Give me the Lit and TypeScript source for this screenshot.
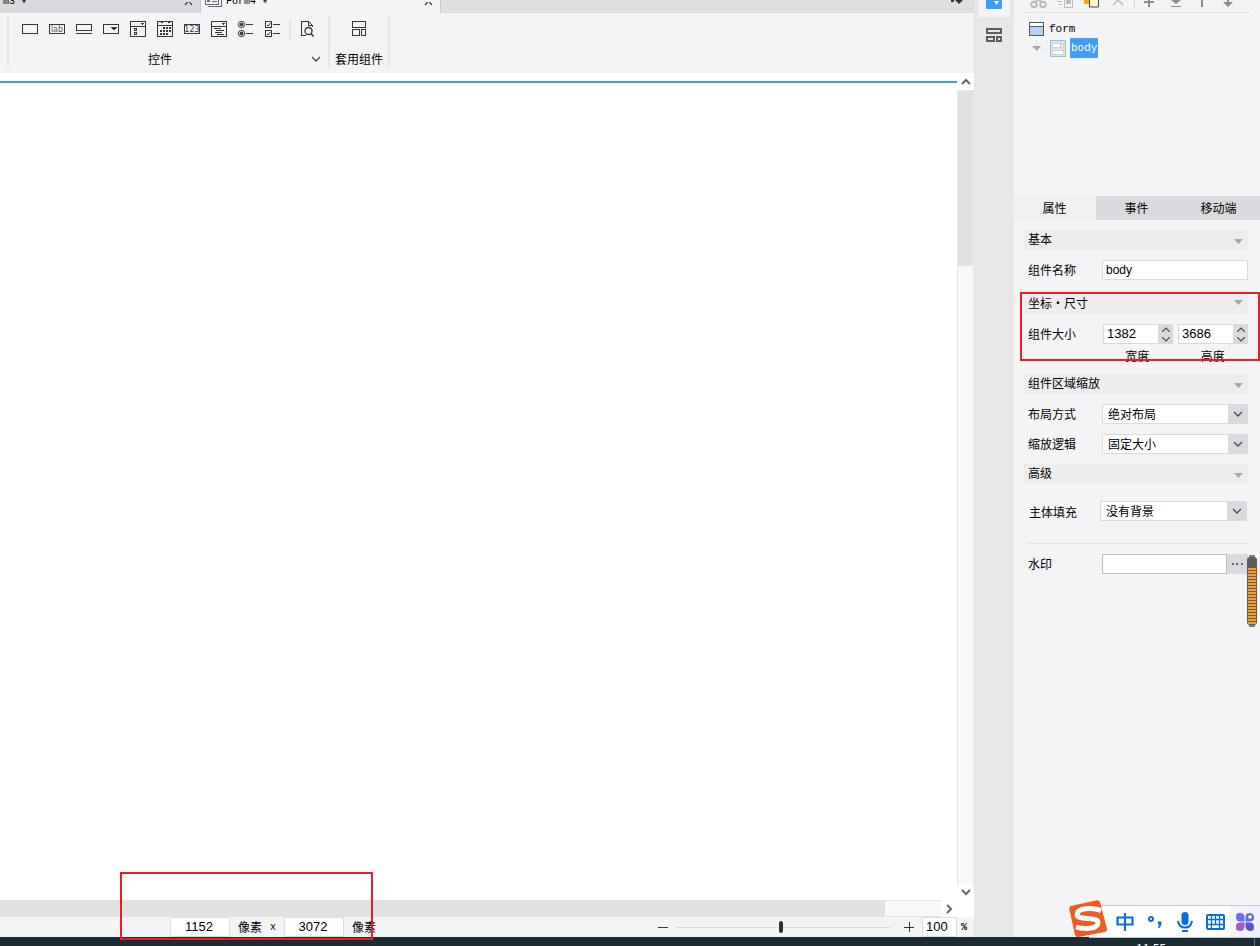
import { LitElement, html, css, svg } from "lit";
import { customElement, property, state } from "lit/decorators.js";

/* Component palette glyphs, each drawn on an 18x18 grid */
const palette = [
  { name: "文本框", art: svg`<path d="M1.5 4.5h15v9h-15z"/>` },
  {
    name: "标签",
    art: svg`<path d="M1.5 4.5h15v9h-15z"/><text x="9" y="12" font-size="8" text-anchor="middle" fill="#55585d" stroke="none">lab</text>`,
  },
  { name: "按钮", art: svg`<path d="M1.5 4.5h15v6h-15zM1 13.5h16"/>` },
  { name: "下拉框", art: svg`<path d="M1.5 4.5h15v9h-15z"/><path d="M9 7h6l-3 4z" fill="#33363b" stroke="none"/>` },
  { name: "下拉复选", art: svg`<path d="M1.5 1.5h15v15h-15zM1 6.5h16M5 8.5h2v2h-2zM5 12.5h2v2h-2z"/><path d="M11 3h4l-2 2z" fill="#33363b" stroke="none"/>` },
  {
    name: "日期",
    art: svg`<path d="M1.5 1.5h15v15h-15zM1 5.5h16"/><path d="M4.5 2.5h2M11.5 2.5h2"/><path d="M7 8h8M4 11h11M4 14h8" stroke-width="2" stroke-dasharray="2 1"/>`,
  },
  {
    name: "数字",
    art: svg`<path d="M1.5 4.5h15v9h-15z"/><text x="9" y="12" font-size="8" text-anchor="middle" fill="#33363b" stroke="none">123</text>`,
  },
  { name: "视图树", art: svg`<path d="M1.5 1.5h15v15h-15zM1 6.5h16M4 8.5h7M6 10.5h8M5 12.5h7M7 14.5h7"/><path d="M11 3h4l-2 2z" fill="#33363b" stroke="none"/>` },
  {
    name: "单选组",
    art: svg`<g shape-rendering="auto"><circle cx="4.5" cy="4.5" r="3.2"/><circle cx="4.5" cy="13.5" r="3.2"/><circle cx="4.5" cy="4.5" r="1.5" fill="#33363b"/><circle cx="4.5" cy="13.5" r="1.5" fill="#33363b"/></g><path d="M9 4.5h7M9 13.5h7"/>`,
  },
  {
    name: "复选组",
    art: svg`<path d="M1.5 1.5h6v6h-6zM1.5 10.5h6v6h-6zM9 4.5h7M9 13.5h7"/><path shape-rendering="auto" d="M3 5l1 1 2.5-3M3 14l1 1 2.5-3"/>`,
  },
];

const chevronDown = svg`<path d="M1 1l4 4 4-4" fill="none" stroke="#44474c" stroke-width="1.3"/>`;

@customElement("tool-ribbon")
class ToolRibbon extends LitElement {
  static styles = css`
    :host {
      display: flex;
      box-sizing: border-box;
      height: 60px;
      padding: 3px 0 6px 7px;
      background: #f4f4f7;
    }
    .group {
      display: flex;
      flex-direction: column;
      justify-content: space-between;
      border-right: 2px solid #e9e7dc;
    }
    .group.first {
      width: 319px;
      border-left: 2px solid #e9e7dc;
    }
    .group.second {
      width: 58px;
      align-items: center;
    }
    .icons {
      display: flex;
      align-items: center;
      gap: 9px;
      height: 26px;
      padding-left: 12px;
    }
    .second .icons {
      padding: 0;
    }
    button {
      display: block;
      border: 0;
      padding: 0;
      background: none;
    }
    svg {
      display: block;
      fill: none;
      stroke: #33363b;
      font-family: "DejaVu Sans", sans-serif;
    }
    .divider {
      width: 2px;
      height: 20px;
      margin: 0 -1px 0 -2px;
      background: #e9e7dc;
    }
    .caption {
      display: grid;
      grid-template-columns: 1fr auto;
      align-items: center;
      height: 16px;
      line-height: 16px;
      text-align: center;
      padding-right: 7px;
    }
    .second .caption {
      padding: 0;
      display: block;
    }
  `;
  render() {
    return html`
      <div class="group first">
        <div class="icons">
          ${palette.map(
            (p) => html`<button aria-label=${p.name}>
              <svg width="18" height="18" shape-rendering="crispEdges">${p.art}</svg>
            </button>`
          )}
          <span class="divider"></span>
          <button aria-label="预览">
            <svg width="18" height="18">
              <path d="M13.5 7V5.5L9.5 1.5h-7v14h4M9.5 1.5v4h4" shape-rendering="crispEdges" />
              <circle cx="9.5" cy="11" r="3.5" stroke-width="1.3" />
              <path d="M12 13.5l2.5 3" stroke-width="1.5" />
            </svg>
          </button>
        </div>
        <div class="caption">
          <span>控件</span>
          <button aria-label="更多控件"><svg width="10" height="7">${chevronDown}</svg></button>
        </div>
      </div>
      <div class="group second">
        <div class="icons">
          <button aria-label="套用组件">
            <svg width="18" height="18" shape-rendering="crispEdges">
              <path d="M2.5 1.5h13v6h-13zM2.5 9.5h7v6h-7zM11.5 9.5h4v6h-4z" />
            </svg>
          </button>
        </div>
        <div class="caption">套用组件</div>
      </div>
    `;
  }
}

@customElement("design-area")
class DesignArea extends LitElement {
  static styles = css`
    :host {
      display: grid;
      grid-template-columns: minmax(0, 1fr) 17px;
      grid-template-rows: minmax(0, 1fr) 17px;
      background: #fff;
    }
    .sheet {
      padding-top: 8px;
    }
    .edge {
      height: 2px;
      background: #409cf8;
    }
    button {
      display: grid;
      place-items: center;
      flex: none;
      border: 0;
      padding: 0;
      background: #fff;
    }
    svg {
      fill: none;
      stroke: #66686c;
      stroke-width: 2;
    }
    .vbar {
      display: flex;
      flex-direction: column;
    }
    .vbar button {
      height: 17px;
    }
    .vbar .down {
      height: 15px;
    }
    .vtrack {
      flex: 1;
      background: #f8f8f7;
      border: solid #e9e8e2;
      border-width: 1px 1px 0 1px;
    }
    .vthumb {
      height: 22%;
      background: #e1e1e1;
    }
    .hbar {
      display: flex;
    }
    .hbar button {
      width: 16px;
    }
    .htrack {
      flex: 1;
      box-sizing: border-box;
      background: #f8f8f7;
      border: solid #e9e6d9;
      border-width: 1px 0;
    }
    .hthumb {
      width: 94%;
      height: 100%;
      background: #e1e1e1;
    }
  `;
  render() {
    return html`
      <div class="sheet"><div class="edge"></div></div>
      <div class="vbar">
        <button aria-label="向上"><svg width="10" height="7"><path d="M1 6l4-4 4 4" /></svg></button>
        <div class="vtrack"><div class="vthumb"></div></div>
        <button class="down" aria-label="向下"><svg width="10" height="7"><path d="M1 1l4 4 4-4" /></svg></button>
      </div>
      <div class="hbar">
        <div class="htrack"><div class="hthumb"></div></div>
        <button aria-label="向右"><svg width="7" height="10"><path d="M1 1l4 4-4 4" /></svg></button>
      </div>
    `;
  }
}

@customElement("status-bar")
class StatusBar extends LitElement {
  @state() zoom = 49;
  static styles = css`
    :host {
      display: flex;
      justify-content: space-between;
      height: 20px;
      line-height: 20px;
      background: #f4f4f7;
    }
    .size,
    .zoom {
      display: flex;
      align-items: center;
    }
    .size {
      padding-left: 170px;
      gap: 8px;
    }
    .zoom {
      gap: 8px;
      padding-right: 7px;
    }
    input {
      box-sizing: border-box;
      font: 13px "Liberation Sans", sans-serif;
      color: #000;
    }
    .num {
      width: 60px;
      height: 20px;
      padding: 0 2px 1px 0;
      border: 1px solid #dcdde0;
      background: #fff;
      text-align: center;
    }
    .pct {
      width: 35px;
      padding: 0 3px 1px;
      text-align: left;
    }
    .by {
      font: 10px "Liberation Mono", monospace;
      width: 6px;
    }
    .sign {
      font: bold 10px "Liberation Mono", monospace;
      margin-left: -4px;
    }
    .zoom button {
      border: 0;
      padding: 0;
      background: none;
      display: grid;
    }
    svg {
      stroke: #33363b;
    }
    .slider {
      appearance: none;
      width: 214px;
      height: 12px;
      margin: 0 6px 0 0;
      background: linear-gradient(#d9dadd, #d9dadd) center / 100% 1px no-repeat;
    }
    .slider::-webkit-slider-thumb {
      appearance: none;
      width: 4px;
      height: 12px;
      border-radius: 2px;
      background: #333;
    }
  `;
  render() {
    return html`
      <div class="size">
        <input class="num" aria-label="宽度像素" value="1152" />
        <span>像素</span><span class="by">x</span>
        <input class="num" aria-label="高度像素" value="3072" />
        <span>像素</span>
      </div>
      <div class="zoom">
        <button aria-label="缩小"><svg width="10" height="10"><path d="M0 5.5h10" /></svg></button>
        <input
          class="slider"
          type="range"
          aria-label="缩放"
          .value=${String(this.zoom)}
          @input=${(e: Event) => (this.zoom = Number((e.target as HTMLInputElement).value))}
        />
        <button aria-label="放大"><svg width="10" height="10"><path d="M0 5.5h10M5.5 0v10" /></svg></button>
        <input class="num pct" aria-label="缩放比例" value="100" />
        <span class="sign">%</span>
      </div>
    `;
  }
}

@customElement("section-title")
class SectionTitle extends LitElement {
  @property() text = "";
  static styles = css`
    :host {
      display: flex;
      justify-content: space-between;
      align-items: center;
      height: 20px;
      margin-left: -4px;
      padding: 0 5px 0 4px;
      background: #ededee;
    }
    :host([tall]) {
      height: 24px;
    }
    span {
      padding-bottom: 3px;
    }
    svg {
      margin-top: 4px;
      fill: #a6a7a9;
    }
    :host([tall]) span {
      padding: 0;
    }
    :host([tall]) svg {
      margin-top: 1px;
    }
  `;
  render() {
    return html`<span>${this.text}</span><svg width="9" height="6"><path d="M0 0h9L4.5 5z" /></svg>`;
  }
}

@customElement("property-panel")
class PropertyPanel extends LitElement {
  static styles = css`
    :host {
      display: block;
      background: #f4f4f7;
      overflow: hidden;
    }
    .tools {
      display: flex;
      box-sizing: border-box;
      height: 13px;
      margin: 0 10px;
      padding-left: 6px;
      gap: 9px;
      border-bottom: 1px solid #e3e3e5;
    }
    .tools button {
      border: 0;
      padding: 0;
      background: none;
      height: 12px;
      width: 18px;
    }
    .tools svg,
    .tree svg {
      display: block;
      flex: none;
    }
    .vline {
      width: 1px;
      height: 8px;
      margin: 0 -3px 0 -4px;
      background: #d5d6d8;
    }
    .tree {
      height: 183px;
      box-sizing: border-box;
      padding: 7px 0 0 15px;
      font: 11px "Liberation Mono", monospace;
    }
    .node {
      display: flex;
      align-items: center;
      height: 18px;
    }
    .node.root {
      gap: 5px;
    }
    .node.child {
      height: 20px;
      gap: 4px;
      padding-left: 3px;
    }
    .picked {
      background: #409cf8;
      color: #fff;
      line-height: 20px;
      padding: 0 1px;
    }
    .tabs {
      display: grid;
      grid-template-columns: repeat(3, 1fr);
      height: 24px;
    }
    .tabs button {
      border: 0;
      padding: 0 1px 2px 0;
      font: inherit;
      color: #000;
      background: #d9dadd;
    }
    .tabs .on {
      background: #f0f0f1;
    }
    .fields {
      display: flex;
      flex-direction: column;
      gap: 10px;
      padding: 10px 12px 0 14px;
    }
    .row {
      display: grid;
      grid-template-columns: 74px minmax(0, 1fr);
      align-items: center;
      height: 20px;
    }
    .row label {
      padding-bottom: 2px;
    }
    .row.fill {
      grid-template-columns: 72px minmax(0, 1fr);
      margin: 7px 1px 12px 0;
    }
    .row.fill label {
      padding: 0 0 0 1px;
    }
    hr {
      width: 100%;
      margin: 0;
      border: 0;
      border-top: 1px solid #e4e4e6;
    }
    input,
    select {
      box-sizing: border-box;
      width: 100%;
      height: 20px;
      margin: 0;
      border: 1px solid #d9dadd;
      border-radius: 0;
      background: #fff;
      color: #000;
      font: 13px "Liberation Sans", sans-serif;
      padding: 0 3px 1px;
      min-width: 0;
    }
    .name {
      font-size: 12px;
    }
    select {
      appearance: none;
      grid-area: 1 / 1;
      font: 12px "Noto Sans CJK SC", sans-serif;
      padding: 0 5px 2px;
    }
    .drop {
      display: grid;
    }
    .arrow {
      grid-area: 1 / 1;
      justify-self: end;
      display: grid;
      place-items: center;
      width: 20px;
      height: 20px;
      background: #d9dadd;
      pointer-events: none;
    }
    .pair {
      display: grid;
      grid-template-columns: 1fr 1fr;
      gap: 5px;
      padding-left: 1px;
    }
    .spin {
      display: flex;
    }
    .spin .keys {
      flex: none;
      display: grid;
      width: 14px;
      height: 20px;
      background: #d9dadd;
    }
    .keys button,
    .more {
      display: grid;
      place-items: center;
      border: 0;
      padding: 0;
      background: #d9dadd;
    }
    .captions {
      display: grid;
      grid-template-columns: 1fr 1fr;
      gap: 5px;
      margin: -5px 0 1px 74px;
      height: 14px;
      line-height: 14px;
      text-align: center;
    }
    .browse {
      display: flex;
    }
    .browse input {
      border-color: #bcbdbf;
    }
    .more {
      flex: none;
      width: 21px;
      height: 20px;
    }
  `;

  private drop(id: string, label: string, value: string, cls = "") {
    return html`<div class="row ${cls}">
      <label for=${id}>${label}</label>
      <div class="drop">
        <select id=${id}>
          <option>${value}</option>
        </select>
        <span class="arrow"><svg width="10" height="7">${chevronDown}</svg></span>
      </div>
    </div>`;
  }

  private spin(id: string, label: string, value: string) {
    return html`<div class="spin">
      <input id=${id} aria-label=${label} value=${value} />
      <div class="keys">
        <button aria-label="增加${label}">
          <svg width="8" height="5"><path d="M0 5l4-4 4 4" fill="none" stroke="#44474c" stroke-width="1.2" /></svg>
        </button>
        <button aria-label="减少${label}">
          <svg width="8" height="5"><path d="M0 0l4 4 4-4" fill="none" stroke="#44474c" stroke-width="1.2" /></svg>
        </button>
      </div>
    </div>`;
  }

  render() {
    return html`
      <div class="tools">
        <button aria-label="剪切">
          <svg width="18" height="12" fill="none" stroke="#b9babc" stroke-width="2">
            <circle cx="4" cy="4.5" r="2.8" /><circle cx="13" cy="4.5" r="2.8" /><path d="M5.5 2L8 0M11.5 2L9 0" />
          </svg>
        </button>
        <button aria-label="复制">
          <svg width="18" height="12" fill="none" stroke="#b9babc">
            <path d="M0 1.5h5M2 4.5h3M7.5 0v7.5h8V0" /><path d="M9 0h5v4H9z" fill="#b9babc" stroke="none" />
          </svg>
        </button>
        <button aria-label="粘贴">
          <svg width="18" height="12"><path d="M0 0h6v4H0z" fill="#f5ab17" /><path d="M5.500-1v8h9v-8" fill="#fff4dc" stroke="#44474c" /></svg>
        </button>
        <button aria-label="删除">
          <svg width="18" height="12" fill="none" stroke="#b9babc" stroke-width="1.5"><path d="M2 5l5-5 5 5" /></svg>
        </button>
        <span class="vline"></span>
        <button aria-label="上移一层">
          <svg width="18" height="12" fill="none" stroke="#8b8c8f" stroke-width="2"><path d="M8 0v7M3 2h10" /></svg>
        </button>
        <button aria-label="下移一层">
          <svg width="18" height="12" fill="#8b8c8f"><path d="M3 0h10L8 4zM3 6h10v1H3z" /></svg>
        </button>
        <button aria-label="置顶">
          <svg width="18" height="12" fill="none" stroke="#8b8c8f" stroke-width="2"><path d="M7 0v7" /></svg>
        </button>
        <button aria-label="置底">
          <svg width="18" height="12" fill="#8b8c8f"><path d="M5 0h2v2h4L6 7 1 2h4z" /></svg>
        </button>
      </div>
      <div class="tree">
        <div class="node root">
          <svg width="15" height="14" fill="none" shape-rendering="crispEdges">
            <path d="M.5.5h14v13H.5z" fill="#fff" /><path d="M1 5h13v8H1z" fill="#b8d0f2" />
            <path d="M.5.5h14v13H.5zM0 4.5h15" stroke="#55585e" />
          </svg>
          <span>form</span>
        </div>
        <div class="node child">
          <svg width="14" height="16" fill="none">
            <path d="M4.5 0v6M9 8.500h4" stroke="#e3e3e5" /><path d="M0 6h9L5 11z" fill="#a6a7a9" />
          </svg>
          <svg width="16" height="17" shape-rendering="crispEdges">
            <path d="M.5.5h15v16H.5z" fill="#d9e2e9" stroke="#8fc0dc" />
            <path d="M2.5 3.5h8v4h-8zM11.5 3.5h2v4h-2zM2.5 10.5h11v4h-11z" fill="#fff" stroke="#d5d3d0" />
          </svg>
          <span class="picked">body</span>
        </div>
      </div>
      <div class="tabs">
        <button class="on">属性</button><button>事件</button><button>移动端</button>
      </div>
      <div class="fields">
        <section-title text="基本"></section-title>
        <div class="row"><label for="name">组件名称</label><input class="name" id="name" value="body" /></div>
        <section-title tall text="坐标・尺寸"></section-title>
        <div class="row">
          <label for="w">组件大小</label>
          <div class="pair">${this.spin("w", "宽度", "1382")}${this.spin("h", "高度", "3686")}</div>
        </div>
        <div class="captions"><span>宽度</span><span>高度</span></div>
        <section-title text="组件区域缩放"></section-title>
        ${this.drop("layout", "布局方式", "绝对布局")} ${this.drop("scale", "缩放逻辑", "固定大小")}
        <section-title text="高级"></section-title>
        ${this.drop("fill", "主体填充", "没有背景", "fill")}
        <hr />
        <div class="row">
          <label for="mark">水印</label>
          <div class="browse">
            <input id="mark" />
            <button class="more" aria-label="编辑水印">
              <svg width="11" height="2" fill="#66686c"><path d="M0 0h2v2H0zM4 0h2v2H4zM9 0h2v2H9z" /></svg>
            </button>
          </div>
        </div>
      </div>
    `;
  }
}

@customElement("ime-bar")
class ImeBar extends LitElement {
  static styles = css`
    :host {
      display: flex;
      align-items: flex-end;
    }
    .logo {
      margin-right: -19px;
      z-index: 1;
    }
    .keys {
      display: flex;
      align-items: center;
      box-sizing: border-box;
      height: 33px;
      padding-left: 21px;
      background: #fff;
      border: 1px solid #b9cbe0;
      border-width: 1px 0;
    }
    button {
      display: grid;
      place-items: center;
      width: 30px;
      height: 31px;
      padding: 0;
      border: 0;
      background: none;
    }
    .box {
      background: linear-gradient(120deg, #eefaf4, #f6effb 50%, #e8f1fd);
    }
    svg {
      display: block;
    }
  `;
  render() {
    return html`
      <svg class="logo" width="40" height="38">
        <path d="M3 6Q1 6.5 1.2 8.5L7 35Q8 37.5 10 37L37 32Q39.5 31 39 29L32 2Q31 0 29 .3z" fill="#f15a24" />
        <path d="M33 10.5C24 7 9 8 9 14.500 9 21 30 16 30 22.500 30 30 14 29 8 27" fill="none" stroke="#fff" stroke-width="5" />
      </svg>
      <div class="keys">
        <button aria-label="中文">
          <svg width="18" height="18" fill="none" stroke="#0a6fd8" stroke-width="2.2"><path d="M1.5 4.5h15v7h-15zM9 0v18" /></svg>
        </button>
        <button aria-label="中文标点">
          <svg width="16" height="14" fill="none" stroke="#0a6fd8" stroke-width="2">
            <circle cx="4" cy="4" r="2" /><path d="M11 7h3v2q0 2.5-2.5 4 1-2 .5-3z" fill="#0a6fd8" stroke-width="1" />
          </svg>
        </button>
        <button aria-label="语音">
          <svg width="16" height="20" fill="none" stroke="#0a6fd8" stroke-width="2">
            <rect x="4.5" y="0" width="7" height="13" rx="3.5" fill="#0a6fd8" stroke="none" />
            <path d="M1 9q1 6.5 7 6.500T15 9M5 19h6" />
          </svg>
        </button>
        <button aria-label="软键盘">
          <svg width="19" height="16" fill="none" stroke="#0a6fd8">
            <rect x="1" y="1" width="17" height="14" rx="1" stroke-width="2" />
            <path d="M2 5.5h15M2 10.5h15M5.5 2v12M9.5 2v9M13.5 2v12" stroke-width="1.4" />
          </svg>
        </button>
        <button class="box" aria-label="工具箱">
          <svg width="18" height="18">
            <path d="M4 0q4.5 0 4.5 4v4.5H4Q0 8.5 0 4t4-4z" fill="#6a6df5" />
            <path d="M9.5 8.5V4q0-4 4-4T18 4t-4 4.500z" fill="#5a6ff0" />
            <circle cx="14" cy="4" r="1.8" fill="#fff" />
            <path d="M4 9.5h4.5V14q0 4-4.500 4t-4.500-4 4.500-4.500z" fill="#9a5cc8" />
            <path d="M9.5 9.5H14q4 0 4 4.500t-4 4-4.500-4z" fill="#5a55c9" />
          </svg>
        </button>
      </div>
    `;
  }
}

@customElement("app-root")
class AppRoot extends LitElement {
  static styles = css`
    :host {
      position: relative;
      display: flex;
      flex-direction: column;
      height: 100vh;
      overflow: hidden;
      font: 12px "Noto Sans CJK SC", sans-serif;
      color: #000;
      background: #f4f4f7;
    }
    .main {
      flex: 1;
      min-height: 0;
      display: grid;
      grid-template-columns: minmax(0, 1fr) 40px 246px;
    }
    .work {
      display: flex;
      flex-direction: column;
      min-width: 0;
    }
    design-area {
      flex: 1;
      min-height: 0;
    }
    .files {
      display: flex;
      height: 13px;
      overflow: hidden;
      background: #dfdfe1;
      font: 10px "Liberation Mono", monospace;
    }
    .file {
      display: flex;
      align-items: flex-end;
      justify-content: space-between;
      box-sizing: border-box;
      padding: 0 7px 6px 4px;
      border-right: 1px solid #c9cacd;
      background: #f4f4f7;
    }
    .file.back {
      width: 201px;
      background: #d9dadd;
    }
    .file.front {
      width: 240px;
    }
    .file .title {
      display: flex;
      align-items: flex-end;
      gap: 4px;
    }
    .back .title {
      margin-left: -19px;
    }
    .name {
      white-space: pre;
      line-height: 11px;
    }
    .star {
      vertical-align: -3px;
      line-height: 0;
    }
    .files svg {
      display: block;
    }
    .menu {
      margin: 0 11px 0 auto;
    }
    .files button,
    .rail button {
      border: 0;
      padding: 0;
      background: none;
    }
    .rail {
      background: #e7e7e8;
      padding-left: 4px;
    }
    .rail button {
      display: grid;
      justify-items: center;
      width: 32px;
    }
    .rail .on {
      height: 17px;
      align-items: start;
      background: #f4f4f7;
    }
    .rail .off {
      height: 36px;
      align-items: center;
    }
    .taskbar {
      display: flex;
      justify-content: flex-end;
      height: 9px;
      overflow: hidden;
      background: #1c2c33;
      color: #fff;
      line-height: 22px;
      padding-right: 5px;
    }
    .taskbar time {
      padding-right: 88px;
      border-right: 1px solid #66737a;
    }
    ime-bar {
      position: absolute;
      right: 0;
      bottom: 8px;
    }
    .gauge {
      position: absolute;
      top: 554px;
      right: 2px;
    }
    .mark {
      position: absolute;
      box-sizing: border-box;
      border: 2px solid #ed1c24;
      pointer-events: none;
    }
    .mark.coords {
      top: 292px;
      right: 0;
      width: 240px;
      height: 69px;
    }
    .mark.pixels {
      left: 120px;
      bottom: 6px;
      width: 253px;
      height: 68px;
    }
  `;
  render() {
    return html`
      <div class="main">
        <div class="work">
          <div class="files">
            <div class="file back">
              <span class="title"><span class="name">Form3 <span class="star">*</span></span></span>
              <button aria-label="关闭 Form3">
                <svg width="9" height="5" fill="none" stroke="#44474c" stroke-width="1.3"><path d="M1 3l3.5-4L8 3" /></svg>
              </button>
            </div>
            <div class="file front">
              <span class="title">
                <svg width="17" height="9" shape-rendering="crispEdges" fill="none" stroke="#66686c">
                  <path d="M3 8.5h13.5V1M.5 0v6.5h13V0" /><path d="M2 0h3v4H2z" fill="#3a7bc8" stroke="none" /><path d="M7 3.5h5" />
                </svg>
                <span class="name">Form4 <span class="star">*</span></span>
              </span>
              <button aria-label="关闭 Form4">
                <svg width="9" height="5" fill="none" stroke="#44474c" stroke-width="1.3"><path d="M1 3l3.5-4L8 3" /></svg>
              </button>
            </div>
            <button class="menu" aria-label="文件列表">
              <svg width="12" height="13" fill="#33363b"><path d="M0 0h3v2H0zM4 0h8L8 4z" /></svg>
            </button>
          </div>
          <tool-ribbon></tool-ribbon>
          <design-area></design-area>
          <status-bar></status-bar>
        </div>
        <div class="rail">
          <button class="on" aria-label="组件设置">
            <svg width="16" height="9"><path d="M0 0h16v8q0 1-1 1H1Q0 9 0 8z" fill="#409cf8" /><path d="M8 1h5l-2.500 4z" fill="#fff" /></svg>
          </button>
          <button class="off" aria-label="组件库">
            <svg width="16" height="14" fill="none" stroke="#5b5d66" stroke-width="2" shape-rendering="crispEdges">
              <path d="M1 1h14v4H1zM1 9h7v4H1zM11 9h4v4h-4z" />
            </svg>
          </button>
        </div>
        <property-panel></property-panel>
      </div>
      <div class="taskbar"><time>11:55</time></div>
      <svg class="gauge" width="12" height="74">
        <rect x="3" y="1" width="6" height="72" rx="1" fill="#77797c" />
        <rect x="1" y="3" width="10" height="68" rx="3" fill="#5d5d5d" />
        <path d="M6 14v56" stroke="#fb9d1f" stroke-width="8" stroke-dasharray="2 1" />
      </svg>
      <ime-bar></ime-bar>
      <div class="mark coords"></div>
      <div class="mark pixels"></div>
    `;
  }
}
